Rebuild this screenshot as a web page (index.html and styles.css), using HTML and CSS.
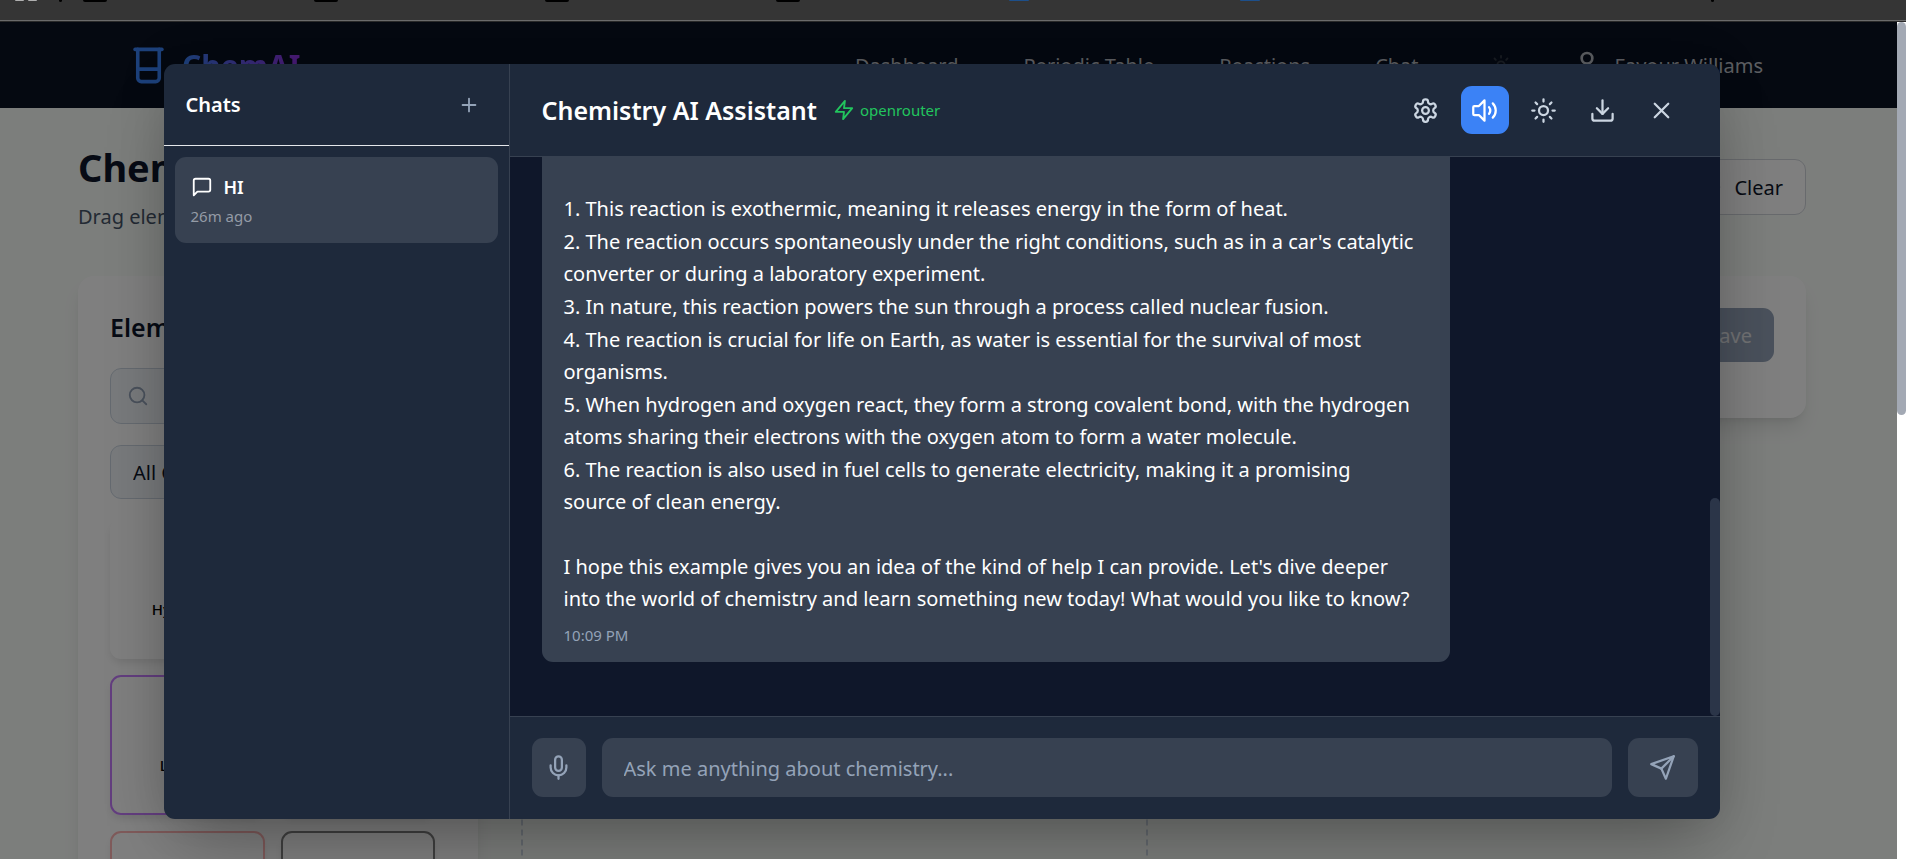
FILE: index.html
```html
<!DOCTYPE html>
<html lang="en">
<head>
    <meta charset="UTF-8">
    <meta name="viewport" content="width=device-width, initial-scale=1.0">
    <title>ChemAI</title>
    <link rel="stylesheet" href="styles.css">
</head>
<body>
    <div class="browser-bar">
        <span class="tab-mark gray"></span>
        <span class="tab-mark gray"></span>
        <span class="tab-mark divider"></span>
        <div class="tab-list">
            <span class="tab-mark"></span>
            <span class="tab-mark"></span>
            <span class="tab-mark"></span>
            <span class="tab-mark"></span>
            <span class="tab-mark blue"></span>
            <span class="tab-mark blue"></span>
        </div>
        <span class="tab-mark divider end"></span>
    </div>

    <div class="viewport">
        <div class="page">
            <header class="navbar">
                <a class="logo" href="#">
                    <svg class="logo-icon" viewBox="0 0 24 24"><path d="M4.5 3h15"/><path d="M6 3v16a2 2 0 0 0 2 2h8a2 2 0 0 0 2-2V3"/><path d="M6 14h12"/></svg>
                    <span class="logo-text">ChemAI</span>
                </a>
                <nav class="nav-links">
                    <a href="#">Dashboard</a>
                    <a href="#">Periodic Table</a>
                    <a href="#">Reactions</a>
                    <a href="#">Chat</a>
                    <button class="nav-theme" aria-label="Theme">
                        <svg class="icon-sm" viewBox="0 0 24 24"><circle cx="12" cy="12" r="4"/><path d="M12 2v2M12 20v2M4.93 4.93l1.41 1.41M17.66 17.66l1.41 1.41M2 12h2M20 12h2M6.34 17.66l-1.41 1.41M19.07 4.93l-1.41 1.41"/></svg>
                    </button>
                    <a class="nav-user" href="#">
                        <svg class="icon-user" viewBox="0 0 24 24"><circle cx="12" cy="7" r="4"/><path d="M19 21v-2a4 4 0 0 0-4-4H9a4 4 0 0 0-4 4v2"/></svg>
                        Favour Williams
                    </a>
                </nav>
            </header>

            <main class="content">
                <div class="page-head">
                    <div>
                        <h1>Chemistry Workspace</h1>
                        <p>Drag elements to create reactions</p>
                    </div>
                    <button class="clear-btn">
                        <svg class="icon-sm" viewBox="0 0 24 24"><path d="M3 12a9 9 0 1 0 9-9 9.75 9.75 0 0 0-6.74 2.74L3 8"/><path d="M3 3v5h5"/></svg>
                        Clear
                    </button>
                </div>

                <div class="columns">
                    <section class="card elements">
                        <h2>Elements</h2>
                        <div class="search-box">
                            <svg class="icon-sm" viewBox="0 0 24 24"><circle cx="11" cy="11" r="8"/><path d="m21 21-4.3-4.3"/></svg>
                            <input type="text" aria-label="Search elements">
                        </div>
                        <select class="category" aria-label="Category">
                            <option>All Categories</option>
                        </select>
                        <div class="element-grid">
                            <div class="element"><span>Hydrogen</span></div>
                            <div class="element"><span>Helium</span></div>
                            <div class="element purple"><span>Lithium</span></div>
                            <div class="element"><span>Beryllium</span></div>
                            <div class="element pink"></div>
                            <div class="element dark"></div>
                        </div>
                    </section>
                    <section class="workspace">
                        <div class="card toolbar">
                            <button class="save-btn">Save</button>
                        </div>
                        <div class="drop-zone"></div>
                    </section>
                </div>
            </main>
        </div>
        <div class="page-scroll"><div class="page-thumb"></div></div>

        <div class="overlay">
            <div class="modal">
                <aside class="sidebar">
                    <div class="sidebar-head">
                        <h3>Chats</h3>
                        <button class="new-chat" aria-label="New chat">
                            <svg class="icon-sm" viewBox="0 0 24 24"><path d="M5 12h14M12 5v14"/></svg>
                        </button>
                    </div>
                    <button class="chat-item">
                        <span class="chat-name">
                            <svg class="icon-sm" viewBox="0 0 24 24"><path d="M21 15a2 2 0 0 1-2 2H7l-4 4V5a2 2 0 0 1 2-2h14a2 2 0 0 1 2 2z"/></svg>
                            HI
                        </span>
                        <span class="chat-time">26m ago</span>
                    </button>
                </aside>

                <section class="chat">
                    <div class="chat-head">
                        <h2>Chemistry AI Assistant</h2>
                        <span class="provider">
                            <svg viewBox="0 0 24 24"><path d="M13 2 3 14h9l-1 8 10-12h-9l1-8z"/></svg>
                            openrouter
                        </span>
                        <div class="actions">
                            <button aria-label="Settings">
                                <svg viewBox="0 0 24 24"><path d="M12.22 2h-.44a2 2 0 0 0-2 2v.18a2 2 0 0 1-1 1.73l-.43.25a2 2 0 0 1-2 0l-.15-.08a2 2 0 0 0-2.73.73l-.22.38a2 2 0 0 0 .73 2.73l.15.1a2 2 0 0 1 1 1.72v.51a2 2 0 0 1-1 1.74l-.15.09a2 2 0 0 0-.73 2.73l.22.38a2 2 0 0 0 2.73.73l.15-.08a2 2 0 0 1 2 0l.43.25a2 2 0 0 1 1 1.73V20a2 2 0 0 0 2 2h.44a2 2 0 0 0 2-2v-.18a2 2 0 0 1 1-1.73l.43-.25a2 2 0 0 1 2 0l.15.08a2 2 0 0 0 2.73-.73l.22-.39a2 2 0 0 0-.73-2.73l-.15-.08a2 2 0 0 1-1-1.74v-.5a2 2 0 0 1 1-1.74l.15-.09a2 2 0 0 0 .73-2.73l-.22-.38a2 2 0 0 0-2.73-.73l-.15.08a2 2 0 0 1-2 0l-.43-.25a2 2 0 0 1-1-1.73V4a2 2 0 0 0-2-2z"/><circle cx="12" cy="12" r="3"/></svg>
                            </button>
                            <button class="active" aria-label="Sound">
                                <svg viewBox="0 0 24 24"><path d="M12 3 7 8H3a1 1 0 0 0-1 1v6a1 1 0 0 0 1 1h4l5 5V3z"/><path d="M16 9a5 5 0 0 1 0 6"/><path d="M19.36 5.64a9 9 0 0 1 0 12.73"/></svg>
                            </button>
                            <button aria-label="Theme">
                                <svg viewBox="0 0 24 24"><circle cx="12" cy="12" r="4"/><path d="M12 2v2M12 20v2M4.93 4.93l1.41 1.41M17.66 17.66l1.41 1.41M2 12h2M20 12h2M6.34 17.66l-1.41 1.41M19.07 4.93l-1.41 1.41"/></svg>
                            </button>
                            <button aria-label="Download">
                                <svg viewBox="0 0 24 24"><path d="M21 15v4a2 2 0 0 1-2 2H5a2 2 0 0 1-2-2v-4"/><path d="m7 10 5 5 5-5"/><path d="M12 15V3"/></svg>
                            </button>
                            <button aria-label="Close">
                                <svg viewBox="0 0 24 24"><path d="M18 6 6 18M6 6l12 12"/></svg>
                            </button>
                        </div>
                    </div>

                    <div class="messages">
                        <div class="message">
                            <p>1. This reaction is exothermic, meaning it releases energy in the form of heat.</p>
                            <p>2. The reaction occurs spontaneously under the right conditions, such as in a car's catalytic<br>converter or during a laboratory experiment.</p>
                            <p>3. In nature, this reaction powers the sun through a process called nuclear fusion.</p>
                            <p>4. The reaction is crucial for life on Earth, as water is essential for the survival of most<br>organisms.</p>
                            <p>5. When hydrogen and oxygen react, they form a strong covalent bond, with the hydrogen<br>atoms sharing their electrons with the oxygen atom to form a water molecule.</p>
                            <p>6. The reaction is also used in fuel cells to generate electricity, making it a promising<br>source of clean energy.</p>
                            <p class="closing">I hope this example gives you an idea of the kind of help I can provide. Let's dive deeper<br>into the world of chemistry and learn something new today! What would you like to know?</p>
                            <span class="message-time">10:09 PM</span>
                        </div>
                        <div class="messages-thumb"></div>
                    </div>

                    <form class="composer">
                        <button type="button" class="mic-btn" aria-label="Record">
                            <svg viewBox="0 0 24 24"><path d="M12 2a3 3 0 0 0-3 3v7a3 3 0 0 0 6 0V5a3 3 0 0 0-3-3Z"/><path d="M19 10v2a7 7 0 0 1-14 0v-2"/><path d="M12 19v3"/></svg>
                        </button>
                        <input type="text" placeholder="Ask me anything about chemistry..." aria-label="Message">
                        <button type="button" class="send-btn" aria-label="Send">
                            <svg viewBox="0 0 24 24"><path d="m22 2-7 20-4-9-9-4Z"/><path d="M22 2 11 13"/></svg>
                        </button>
                    </form>
                </section>
            </div>
        </div>
    </div>
</body>
</html>
```

FILE: styles.css
```css
* {
    box-sizing: border-box;
}

body {
    font-family: "Segoe UI", "Noto Sans", sans-serif;
    font-size: 20px;
    margin: 0;
    height: 100vh;
    display: flex;
    flex-direction: column;
    overflow: hidden;
}

h1, h2, h3, p {
    margin: 0;
}

button, input, select {
    font-family: inherit;
    font-size: inherit;
    border: none;
    padding: 0;
}

button {
    background: none;
    cursor: pointer;
}

a {
    color: inherit;
    text-decoration: none;
}

svg {
    width: 27px;
    height: 27px;
    fill: none;
    stroke: currentColor;
    stroke-width: 2;
    stroke-linecap: round;
    stroke-linejoin: round;
    flex-shrink: 0;
}

.icon-sm {
    width: 22px;
    height: 22px;
}

/* Browser strip */
.browser-bar {
    height: 22px;
    flex-shrink: 0;
    background-color: #353535;
    border-bottom: 1px solid #2a2a2a;
    box-shadow: inset 0 -1px #6b6b6b;
    display: flex;
    align-items: flex-start;
    gap: 4px;
    padding-left: 15px;
}

.tab-mark {
    width: 24px;
    height: 2px;
    background-color: #000;
    border-radius: 0 0 2px 2px;
}

.tab-mark.gray {
    width: 9px;
    height: 1px;
    background-color: #b0b0b0;
}

.tab-mark.divider {
    width: 3px;
    margin-left: 18px;
}

.tab-mark.divider.end {
    margin: 0 192px 0 auto;
}

.tab-mark.blue {
    width: 20px;
    height: 1px;
    margin: 0 2px;
    background-color: #1d4f8a;
}

.tab-list {
    display: flex;
    gap: 207px;
    margin-left: 17px;
}

/* Page below the dialog */
.viewport {
    position: relative;
    flex: 1;
    min-height: 0;
    display: flex;
}

.page {
    flex: 1;
    overflow: hidden;
    background-color: #f9fcf9;
}

.page-scroll {
    width: 9px;
    background-color: #fff;
}

.page-thumb {
    height: 47%;
    background-color: #a3a9b4;
    border-radius: 5px;
}

.navbar {
    height: 86px;
    background-color: #0b1222;
    color: #b9bdc4;
    display: flex;
    justify-content: space-between;
    align-items: center;
    padding: 0 134px 0 127px;
}

.logo {
    display: flex;
    align-items: center;
    gap: 12px;
}

.logo-icon {
    width: 43px;
    height: 43px;
    color: #3b82f6;
}

.logo-text {
    font-size: 30px;
    font-weight: 700;
    background: linear-gradient(to right, #3b82f6, #9333ea);
    -webkit-background-clip: text;
    background-clip: text;
    color: transparent;
}

.nav-links {
    display: flex;
    align-items: center;
    gap: 65px;
}

.nav-theme {
    display: flex;
    margin: 0 -6px 0 6px;
    color: #333a46;
}

.nav-user {
    display: flex;
    align-items: center;
    gap: 12px;
}

.icon-user {
    width: 32px;
    height: 32px;
}

.content {
    padding: 32px 91px 0 78px;
}

.page-head {
    display: flex;
    justify-content: space-between;
    align-items: flex-start;
    height: 136px;
}

.page-head h1 {
    font-size: 38px;
    line-height: 54px;
    color: #0f172a;
}

.page-head p {
    line-height: 46px;
    color: #475569;
}

.clear-btn {
    display: flex;
    align-items: center;
    gap: 12px;
    height: 56px;
    margin-top: 19px;
    padding: 0 22px;
    border: 1px solid #d1d5db;
    border-radius: 11px;
    background-color: #fff;
    color: #0f172a;
}

.columns {
    display: grid;
    grid-template-columns: 400px 1fr;
    gap: 43px;
}

.card {
    background-color: #fff;
    border-radius: 16px;
    box-shadow: 0 13px 20px -4px rgba(0, 0, 0, 0.1), 0 5px 8px -5px rgba(0, 0, 0, 0.1);
    padding: 32px;
}

.elements h2 {
    font-size: 25px;
    font-weight: 600;
    line-height: 38px;
    margin-bottom: 22px;
    color: #0f172a;
}

.search-box {
    display: flex;
    align-items: center;
    height: 56px;
    padding: 0 16px;
    margin-bottom: 21px;
    border: 1px solid #cbd5e1;
    border-radius: 11px;
    background-color: #f1f5f9;
    color: #94a3b8;
}

.search-box input {
    flex: 1;
    min-width: 0;
    background: none;
}

.category {
    width: 100%;
    height: 54px;
    padding: 0 22px;
    border: 1px solid #cbd5e1;
    border-radius: 11px;
    background-color: #f1f5f9;
    color: #0f172a;
    appearance: none;
}

.element-grid {
    display: grid;
    grid-template-columns: 1fr 1fr;
    gap: 16px;
    margin-top: 20px;
    padding-right: 11px;
}

.element {
    height: 140px;
    display: flex;
    flex-direction: column;
    align-items: center;
    justify-content: flex-end;
    padding-bottom: 38px;
    border: 2px solid transparent;
    border-radius: 11px;
    box-shadow: 0 5px 8px -1px rgba(0, 0, 0, 0.1);
    font-size: 15px;
    font-weight: 500;
}

.element.purple {
    border-color: #c77dff;
}

.element.pink {
    border-color: #ffb5b5;
}

.element.dark {
    border-color: #808080;
}

.toolbar {
    height: 142px;
    display: flex;
    justify-content: flex-end;
    align-items: flex-start;
}

.save-btn {
    height: 54px;
    padding: 0 22px;
    border-radius: 11px;
    background-color: #94a3b8;
    color: #e2e4e8;
}

.drop-zone {
    width: calc(50% - 16px);
    height: 600px;
    margin-top: 32px;
    border: 2px dashed #cbd5e1;
    border-radius: 11px;
}

/* Dialog */
.overlay {
    position: absolute;
    inset: 0 9px 0 0;
    padding: 2px 14px 0 0;
    background-color: rgba(0, 0, 0, 0.5);
    display: flex;
    justify-content: center;
    align-items: center;
}

.modal {
    width: 1556px;
    max-width: 90%;
    height: 755px;
    max-height: 96%;
    display: flex;
    overflow: hidden;
    border-radius: 11px;
    background-color: #1e293b;
    color: #fff;
    box-shadow: 0 34px 67px -16px rgba(0, 0, 0, 0.3), 0 0 50px rgba(0, 0, 0, 0.1);
}

.sidebar {
    width: 346px;
    flex-shrink: 0;
    border-right: 1px solid #374151;
}

.sidebar-head {
    display: flex;
    justify-content: space-between;
    align-items: center;
    height: 82px;
    padding: 0 29px 0 22px;
    border-bottom: 1px solid #e5e7eb;
}

.sidebar-head h3 {
    font-size: 20px;
    font-weight: 600;
}

.new-chat {
    display: flex;
    color: #94a3b8;
}

.chat-item {
    display: flex;
    flex-direction: column;
    justify-content: center;
    gap: 4px;
    width: calc(100% - 22px);
    height: 86px;
    margin: 11px;
    padding: 0 16px;
    border-radius: 11px;
    background-color: #374151;
    color: #fff;
    text-align: left;
}

.chat-name {
    display: flex;
    align-items: center;
    gap: 11px;
    font-size: 18px;
    font-weight: 600;
    line-height: 28px;
}

.chat-time {
    font-size: 15px;
    line-height: 22px;
    color: #949ba6;
}

.chat {
    flex: 1;
    min-width: 0;
    display: flex;
    flex-direction: column;
}

.chat-head {
    display: flex;
    align-items: center;
    height: 93px;
    padding: 0 34px 0 32px;
    border-bottom: 1px solid #374151;
}

.chat-head h2 {
    font-size: 25px;
    font-weight: 600;
}

.provider {
    display: flex;
    align-items: center;
    gap: 5px;
    margin-left: 16px;
    font-size: 15px;
    color: #22c55e;
}

.provider svg {
    width: 22px;
    height: 22px;
}

.actions {
    display: flex;
    gap: 11px;
    margin-left: auto;
}

.actions button {
    width: 48px;
    height: 48px;
    display: flex;
    justify-content: center;
    align-items: center;
    border-radius: 11px;
    color: #cbd5e1;
}

.actions .active {
    background-color: #3b82f6;
    color: #fff;
}

.messages {
    position: relative;
    flex: 1;
    min-height: 0;
    overflow: hidden;
    padding: 0 270px 54px 32px;
    background-color: #0f172a;
    display: flex;
    flex-direction: column;
    justify-content: flex-end;
}

.message {
    flex-shrink: 0;
    display: flex;
    flex-direction: column;
    gap: 1px;
    padding: 64px 22px 15px;
    border-radius: 11px;
    background-color: #374151;
    line-height: 32px;
    white-space: nowrap;
}

.closing {
    margin-top: 32px;
}

.message-time {
    margin-top: 7px;
    font-size: 15px;
    line-height: 24px;
    color: #94a3b8;
}

.messages-thumb {
    position: absolute;
    right: 0;
    bottom: 0;
    width: 10px;
    height: 218px;
    border-radius: 5px;
    background-color: #2b3548;
}

.composer {
    display: flex;
    gap: 16px;
    padding: 21px 22px 22px;
    border-top: 1px solid #374151;
}

.composer button,
.composer input {
    height: 59px;
    border-radius: 11px;
    background-color: #374151;
    color: #94a3b8;
}

.composer button {
    display: flex;
    justify-content: center;
    align-items: center;
}

.composer .mic-btn {
    width: 54px;
}

.composer .send-btn {
    width: 70px;
}

.composer input {
    flex: 1;
    min-width: 0;
    padding: 2px 22px 0;
}

.composer input::placeholder {
    color: #94a3b8;
}
```
